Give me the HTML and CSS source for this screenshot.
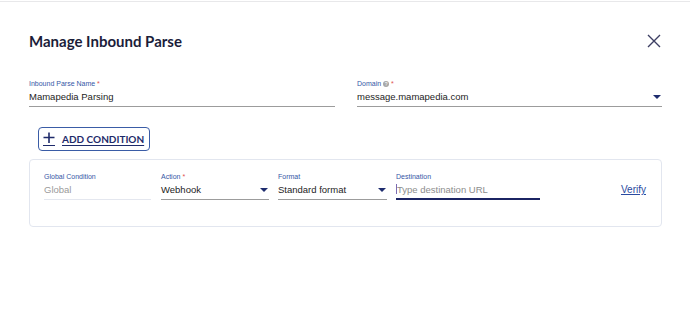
FILE: index.html
```html
<!DOCTYPE html>
<html lang="en">
<head>
  <meta charset="UTF-8" />
  <title>Manage Inbound Parse</title>
  <link rel="stylesheet" href="styles.css">
</head>
<body>
  <div class="modal">
    <div class="modal-head">
      <h1 class="title">Manage Inbound Parse</h1>
      <button class="close-btn" aria-label="Close">
        <svg width="14" height="14" viewBox="0 0 14 14"><path d="M1 1 L13 13 M13 1 L1 13" stroke="#3d3f63" stroke-width="1.4" fill="none"/></svg>
      </button>
    </div>

    <div class="fields">
      <div class="field">
        <div class="label">Inbound Parse Name <span class="req">*</span></div>
        <div class="value">Mamapedia Parsing</div>
      </div>
      <div class="field">
        <div class="label">Domain <span class="help">?</span> <span class="req">*</span></div>
        <div class="value select">message.mamapedia.com <span class="caret"></span></div>
      </div>
    </div>

    <button class="add-btn">
      <svg class="plus" width="12" height="12" viewBox="0 0 12 12"><path d="M6 0.5 V11 M0.5 5.5 H11.5" stroke="#1e2a6a" stroke-width="1.6" fill="none"/></svg>
      <span class="add-text">ADD CONDITION</span>
    </button>

    <div class="card">
      <div class="field small w-global">
        <div class="label">Global Condition</div>
        <div class="value muted">Global</div>
      </div>
      <div class="field small w-action">
        <div class="label">Action <span class="req">*</span></div>
        <div class="value select">Webhook <span class="caret"></span></div>
      </div>
      <div class="field small w-format">
        <div class="label">Format</div>
        <div class="value select">Standard format <span class="caret"></span></div>
      </div>
      <div class="field small w-dest">
        <div class="label">Destination</div>
        <div class="value active"><span class="cursor"></span>Type destination URL</div>
      </div>
      <a class="verify" href="#">Verify</a>
    </div>
  </div>
</body>
</html>
```

FILE: styles.css
```css
body {
  margin: 0;
  background: #fff;
  font-family: "Liberation Sans", Arial, sans-serif;
}

.modal {
  margin-top: 1px;
  border-top: 1px solid #e8e8ea;
  padding: 0 28px 0 29px;
}

.modal-head {
  display: flex;
  justify-content: space-between;
  align-items: center;
  margin-top: 28px;
}

.title {
  margin: 0;
  font-family: Lato, sans-serif;
  font-weight: 700;
  font-size: 15px;
  line-height: 22px;
  color: #1b1d3a;
}

.close-btn {
  border: none;
  background: none;
  padding: 0;
  margin-right: 1px;
  width: 14px;
  height: 14px;
  cursor: pointer;
}

.fields {
  display: grid;
  grid-template-columns: 306px 305px;
  justify-content: space-between;
  margin-top: 27px;
}

.label {
  font-size: 7px;
  line-height: 9px;
  color: #3557a6;
  height: 9px;
}

.req {
  color: #e0524f;
}

.help {
  display: inline-block;
  width: 6px;
  height: 6px;
  border-radius: 50%;
  background: #a7a7a7;
  color: #fff;
  font-size: 5px;
  line-height: 6px;
  text-align: center;
}

.value {
  position: relative;
  font-size: 9.5px;
  line-height: 14px;
  color: #1d1d1d;
  margin-top: 2px;
  padding-bottom: 2px;
  border-bottom: 1px solid #9c9c9c;
}

.caret {
  position: absolute;
  right: 1px;
  top: 5px;
  width: 0;
  height: 0;
  border-left: 4px solid transparent;
  border-right: 4px solid transparent;
  border-top: 4px solid #1e2c6e;
}

.add-btn {
  display: flex;
  align-items: center;
  margin: 20px 0 0 9px;
  height: 24px;
  width: 112px;
  padding: 0 0 0 4px;
  border: 1px solid #3a5ca6;
  border-radius: 4px;
  background: #fff;
  color: #1e2a6a;
  font-family: Lato, sans-serif;
  cursor: pointer;
}

.plus {
  margin-right: 7px;
  border-bottom: 1px solid #1e2a6a;
  padding-bottom: 1px;
}

.add-text {
  font-size: 10px;
  font-weight: 700;
  text-decoration: underline;
  text-decoration-thickness: 1px;
  text-underline-offset: 2px;
}

.card {
  display: flex;
  align-items: flex-start;
  margin-top: 8px;
  height: 68px;
  box-sizing: border-box;
  border: 1px solid #e2e6ef;
  border-radius: 4px;
  padding: 12px 15px 0 14px;
}

.card .value {
  margin-top: 2px;
  padding-bottom: 2px;
}

.w-global { width: 107px; margin-right: 10px; }
.w-action { width: 108px; margin-right: 9px; }
.w-format { width: 109px; margin-right: 9px; }
.w-dest { width: 144px; }

.value.muted {
  color: #9a9a9a;
  border-bottom-color: #e4e7ef;
}

.value.active {
  color: #8d8d8d;
  border-bottom: 2px solid #1b2463;
  padding-bottom: 1px;
}

.cursor {
  display: inline-block;
  width: 1px;
  height: 10px;
  background: #7b6bb3;
  vertical-align: -1px;
}

.verify {
  margin-left: auto;
  margin-top: 12px;
  font-size: 10px;
  color: #2a4aa0;
  text-decoration: underline;
}
```
